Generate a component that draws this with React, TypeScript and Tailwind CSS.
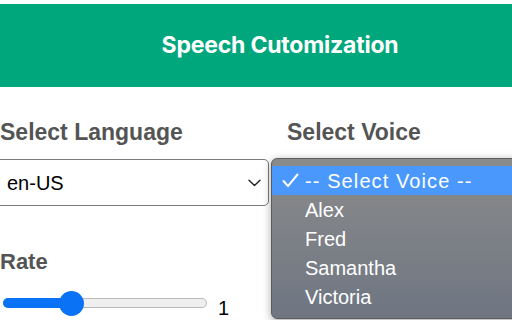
import React from "react";

const voices = ["Alex", "Fred", "Samantha", "Victoria"];

function Chevron() {
  return (
    <svg width="13" height="8" viewBox="0 0 13 8" fill="none">
      <path d="M1 1.2L6.5 6.5L12 1.2" stroke="#222" strokeWidth="1.4" strokeLinecap="round" strokeLinejoin="round" />
    </svg>
  );
}

function Check() {
  return (
    <svg width="17" height="15" viewBox="0 0 17 15" fill="none">
      <path d="M1.5 8L6 13.2L15.5 1.5" stroke="white" strokeWidth="2" strokeLinecap="round" strokeLinejoin="round" />
    </svg>
  );
}

function VoicePopup() {
  return (
    <div className="absolute left-[271px] top-[158px] w-[260px] h-[161px] rounded-[6px] border border-[#5d5d5d] bg-gradient-to-b from-[#8b8b8b] to-[#6f7682] shadow-[0_2px_8px_rgba(0,0,0,0.35)] pt-[7px] overflow-hidden">
      <div className="flex items-center h-[29px] bg-[#4a98fb] text-white text-[20px] tracking-[1.1px]">
        <span className="w-[33px] pl-[10px] flex items-center"><Check /></span>
        <span>-- Select Voice --</span>
      </div>
      {voices.map((v) => (
        <div key={v} className="flex items-center h-[29px] pl-[33px] text-white text-[20px]">
          {v}
        </div>
      ))}
    </div>
  );
}

export default function App() {
  return (
    <div className="relative w-[512px] h-[320px] overflow-hidden bg-white font-['Liberation_Sans',Arial,sans-serif]">
      <div className="h-[4px]" />
      <header className="h-[83px] bg-[#00a67c] flex items-center justify-center pl-[48px]">
        <h1 className="text-white text-[23px] font-bold font-['Inter',sans-serif] tracking-[-0.2px]">Speech Cutomization</h1>
      </header>

      <div className="grid grid-cols-[287px_1fr] pt-[34px]">
        <div>
          <label className="block text-[23px] font-bold text-[#545454] leading-none">Select Language</label>
          <div className="mt-[15px] ml-[-6px] w-[275px] h-[47px] rounded-[5px] border border-[#7a7a7a] flex items-center justify-between pl-[12px] pr-[7px] text-[20px] text-black">
            <span>en-US</span>
            <Chevron />
          </div>
          <label className="block mt-[45px] text-[22px] font-bold text-[#545454] leading-none">Rate</label>
          <div className="flex items-end mt-[25px]">
            <div className="relative ml-[3px] w-[204px] h-[10px] rounded-full bg-[#efefef] border border-[#b9b9b9]">
              <div className="absolute left-[-1px] top-[-1px] h-[10px] w-[70px] rounded-full bg-[#0a72f5]" />
              <div className="absolute left-[55px] top-[-8px] w-[25px] h-[25px] rounded-full bg-[#0a72f5]" />
            </div>
            <span className="ml-[11px] mb-[-10px] text-[20px] text-black leading-none">1</span>
          </div>
        </div>
        <div>
          <label className="block text-[23px] font-bold text-[#545454] leading-none">Select Voice</label>
        </div>
      </div>

      <VoicePopup />
    </div>
  );
}
